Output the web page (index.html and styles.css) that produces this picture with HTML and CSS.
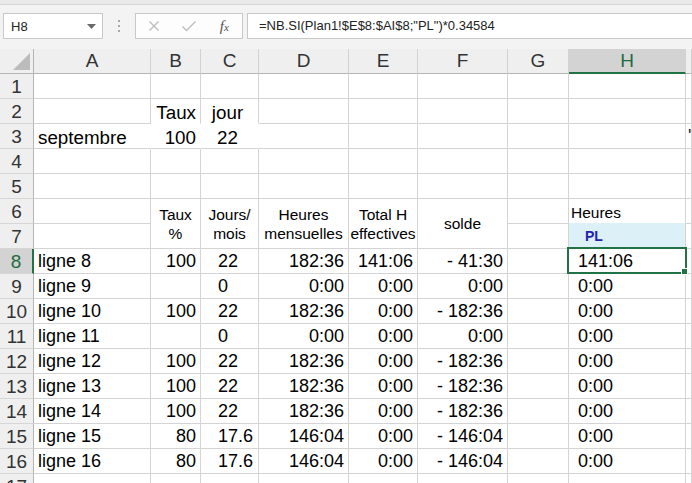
FILE: index.html
```html
<!DOCTYPE html>
<html>
<head>
<meta charset="utf-8">
<link rel="stylesheet" href="styles.css">
</head>
<body>
<div class="app">
  <div class="ribbon"></div>
  <div class="fbar">
    <div class="namebox">H8
      <svg class="dd" width="9" height="5" viewBox="0 0 9 5"><path d="M0 0H9L4.5 5Z" fill="#6a6a6a"/></svg>
    </div>
    <div class="dots"><i></i><i></i><i></i></div>
    <div class="fbtns">
      <div class="btn"><svg width="12" height="12" viewBox="0 0 12 12"><path d="M1.5 1.5L10.5 10.5M10.5 1.5L1.5 10.5" stroke="#bdbdbd" stroke-width="1.4" fill="none"/></svg></div>
      <div class="btn"><svg width="16" height="12" viewBox="0 0 16 12"><path d="M1.5 6.5L5.5 10.5L14.5 1.5" stroke="#bdbdbd" stroke-width="1.4" fill="none"/></svg></div>
      <div class="btn"><span class="fx">f<span>x</span></span></div>
    </div>
    <div class="finput">=NB.SI(Plan1!$E$8:$AI$8;"PL")*0.34584</div>
  </div>
  <div class="sheet">
    <!-- header -->
    <div class="ch corner"><svg width="17" height="17" viewBox="0 0 17 17"><path d="M17 0V17H0Z" fill="#bcbcbc"/></svg></div>
    <div class="ch">A</div><div class="ch">B</div><div class="ch">C</div><div class="ch">D</div><div class="ch">E</div><div class="ch">F</div><div class="ch">G</div><div class="ch sel">H</div><div class="ch"></div>
    <!-- 1 -->
    <div class="rh">1</div><div class="c"></div><div class="c"></div><div class="c"></div><div class="c"></div><div class="c"></div><div class="c"></div><div class="c"></div><div class="c"></div><div class="c"></div>
    <!-- 2 -->
    <div class="rh">2</div><div class="c"></div><div class="c big r nb">Taux</div><div class="c big ctr nb">jour</div><div class="c"></div><div class="c"></div><div class="c"></div><div class="c"></div><div class="c"></div><div class="c"></div>
    <!-- 3 -->
    <div class="rh">3</div><div class="c big l nr">septembre</div><div class="c big r nr">100</div><div class="c big ctr nr">22</div><div class="c"></div><div class="c"></div><div class="c"></div><div class="c"></div><div class="c"></div><div class="c clip">'</div>
    <!-- 4 -->
    <div class="rh">4</div><div class="c"></div><div class="c"></div><div class="c"></div><div class="c"></div><div class="c"></div><div class="c"></div><div class="c"></div><div class="c"></div><div class="c"></div>
    <!-- 5 -->
    <div class="rh">5</div><div class="c"></div><div class="c"></div><div class="c"></div><div class="c"></div><div class="c"></div><div class="c"></div><div class="c"></div><div class="c"></div><div class="c"></div>
    <!-- 6 -->
    <div class="rh">6</div><div class="c"></div>
    <div class="c hd span"><span>Taux</span><span>%</span></div>
    <div class="c hd span"><span>Jours/</span><span>mois</span></div>
    <div class="c hd span"><span>Heures</span><span>mensuelles</span></div>
    <div class="c hd span"><span>Total H</span><span>effectives</span></div>
    <div class="c hd span"><span>solde</span></div>
    <div class="c"></div><div class="c hh">Heures</div><div class="c"></div>
    <!-- 7 -->
    <div class="rh">7</div><div class="c"></div><div class="c"></div><div class="c pl">PL</div><div class="c"></div>
    <!-- 8 -->
    <div class="rh rsel">8</div><div class="c l">ligne 8</div><div class="c r">100</div><div class="c cc">22</div><div class="c r">182:36</div><div class="c r">141:06</div><div class="c r">- 41:30</div><div class="c"></div><div class="c h active">141:06<div class="selbox"></div></div><div class="c"></div>
    <!-- 9 -->
    <div class="rh">9</div><div class="c l">ligne 9</div><div class="c r"></div><div class="c cc">0</div><div class="c r">0:00</div><div class="c r">0:00</div><div class="c r">0:00</div><div class="c"></div><div class="c h">0:00</div><div class="c"></div>
    <!-- 10 -->
    <div class="rh">10</div><div class="c l">ligne 10</div><div class="c r">100</div><div class="c cc">22</div><div class="c r">182:36</div><div class="c r">0:00</div><div class="c r">- 182:36</div><div class="c"></div><div class="c h">0:00</div><div class="c"></div>
    <!-- 11 -->
    <div class="rh">11</div><div class="c l">ligne 11</div><div class="c r"></div><div class="c cc">0</div><div class="c r">0:00</div><div class="c r">0:00</div><div class="c r">0:00</div><div class="c"></div><div class="c h">0:00</div><div class="c"></div>
    <!-- 12 -->
    <div class="rh">12</div><div class="c l">ligne 12</div><div class="c r">100</div><div class="c cc">22</div><div class="c r">182:36</div><div class="c r">0:00</div><div class="c r">- 182:36</div><div class="c"></div><div class="c h">0:00</div><div class="c"></div>
    <!-- 13 -->
    <div class="rh">13</div><div class="c l">ligne 13</div><div class="c r">100</div><div class="c cc">22</div><div class="c r">182:36</div><div class="c r">0:00</div><div class="c r">- 182:36</div><div class="c"></div><div class="c h">0:00</div><div class="c"></div>
    <!-- 14 -->
    <div class="rh">14</div><div class="c l">ligne 14</div><div class="c r">100</div><div class="c cc">22</div><div class="c r">182:36</div><div class="c r">0:00</div><div class="c r">- 182:36</div><div class="c"></div><div class="c h">0:00</div><div class="c"></div>
    <!-- 15 -->
    <div class="rh">15</div><div class="c l">ligne 15</div><div class="c r">80</div><div class="c cc">17.6</div><div class="c r">146:04</div><div class="c r">0:00</div><div class="c r">- 146:04</div><div class="c"></div><div class="c h">0:00</div><div class="c"></div>
    <!-- 16 -->
    <div class="rh">16</div><div class="c l">ligne 16</div><div class="c r">80</div><div class="c cc">17.6</div><div class="c r">146:04</div><div class="c r">0:00</div><div class="c r">- 146:04</div><div class="c"></div><div class="c h">0:00</div><div class="c"></div>
    <!-- 17 -->
    <div class="rh">17</div><div class="c"></div><div class="c"></div><div class="c"></div><div class="c"></div><div class="c"></div><div class="c"></div><div class="c"></div><div class="c"></div><div class="c"></div>
  </div>
</div>
</body>
</html>
```
FILE: styles.css
```css
html, body {
  margin: 0;
  padding: 0;
  background: #ffffff;
}
body {
  font-family: "Liberation Sans", Arial, sans-serif;
  width: 692px;
  height: 483px;
  overflow: hidden;
}
.app {
  width: 692px;
  height: 483px;
  overflow: hidden;
}
.ribbon {
  height: 4px;
  background: #e9e9e9;
  border-bottom: 1px solid #d6d6d6;
}
.fbar {
  height: 44px;
  box-sizing: border-box;
  padding-top: 8px;
  background: #f3f3f3;
  display: flex;
  align-items: flex-start;
}
.namebox {
  margin-left: 3px;
  width: 100px;
  height: 26px;
  box-sizing: border-box;
  background: #ffffff;
  border: 1px solid #c8c8c8;
  display: flex;
  align-items: center;
  justify-content: space-between;
  padding: 0 6px 0 7px;
  font-size: 13px;
  color: #222;
}
.dots {
  width: 32px;
  height: 26px;
  display: flex;
  flex-direction: column;
  align-items: center;
  justify-content: center;
  gap: 3px;
}
.dots i {
  display: block;
  width: 2px;
  height: 2px;
  background: #a8a8a8;
}
.fbtns {
  width: 108px;
  height: 26px;
  box-sizing: border-box;
  border: 1px solid #c8c8c8;
  background: #fdfdfd;
  display: flex;
  align-items: center;
}
.btn {
  flex: 1;
  display: flex;
  align-items: center;
  justify-content: center;
}
.fx {
  font-family: "Liberation Serif", "DejaVu Serif", serif;
  font-style: italic;
  font-size: 15px;
  color: #505050;
  line-height: 1;
}
.fx span {
  font-size: 11px;
}
.finput {
  margin-left: 4px;
  flex: 1;
  height: 26px;
  box-sizing: border-box;
  border: 1px solid #c8c8c8;
  border-right: none;
  background: #ffffff;
  padding-left: 11px;
  font-size: 13px;
  line-height: 24px;
  color: #222;
  white-space: nowrap;
  overflow: hidden;
}
.sheet {
  display: grid;
  grid-template-columns: 34px 117px 50px 58px 90px 69px 90px 61px 117px 6px;
  grid-template-rows: 25px;
  grid-auto-rows: 25px;
}
.ch {
  box-sizing: border-box;
  background: #efefef;
  border-right: 1px solid #d2d2d2;
  border-bottom: 1px solid #b5b5b5;
  text-align: center;
  font-size: 19px;
  line-height: 24px;
  color: #333;
}
.ch.corner {
  display: flex;
  align-items: flex-end;
  justify-content: flex-end;
  padding: 0 3px 3px 0;
  border-right: 1px solid #b5b5b5;
}
.ch.corner svg {
  display: block;
}
.ch.sel {
  background: #d3d3d3;
  color: #1f6b40;
  border-bottom: 2px solid #217346;
}
.rh {
  box-sizing: border-box;
  background: #efefef;
  border-right: 1px solid #b5b5b5;
  border-bottom: 1px solid #d6d6d6;
  text-align: center;
  font-size: 19px;
  line-height: 23px;
  padding-top: 1px;
  color: #333;
}
.rh.rsel {
  background: #d3d3d3;
  color: #1f6b40;
  border-right: 2px solid #217346;
}
.c {
  box-sizing: border-box;
  background: #ffffff;
  border-right: 1px solid #d4d4d4;
  border-bottom: 1px solid #d4d4d4;
  font-size: 18px;
  line-height: 24px;
  color: #000;
  white-space: nowrap;
}
.clip {
  overflow: hidden;
  padding-left: 2px;
  color: #222;
}
.r { text-align: right; padding-right: 4px; }
.l { padding-left: 4px; }
.ctr { text-align: center; padding-right: 4px; }
.cc { padding-left: 17px; }
.h { padding-left: 9px; }
.big {
  font-size: 18.8px;
  padding-top: 1.5px;
}
.nb { border-bottom-color: #ffffff; }
.nr { border-right-color: #ffffff; }
.span {
  grid-row: span 2;
}
.hd {
  font-size: 15.5px;
  line-height: 19.5px;
  display: flex;
  flex-direction: column;
  align-items: center;
  justify-content: center;
  padding-top: 1px;
}
.hh {
  font-size: 15.5px;
  line-height: 21px;
  padding-top: 3px;
  padding-left: 2px;
  border-bottom-color: #dcf0f7;
}
.pl {
  background: #dcf0f7;
  color: #2222b0;
  font-weight: bold;
  font-size: 14px;
  line-height: 24px;
  padding-left: 16px;
}
.active {
  position: relative;
}
.selbox {
  position: absolute;
  left: -2px;
  top: -2px;
  width: 120px;
  height: 27px;
  box-sizing: border-box;
  border: 2px solid #217346;
}
.selbox::after {
  content: "";
  position: absolute;
  right: -3px;
  bottom: -3px;
  width: 5px;
  height: 5px;
  background: #217346;
  border: 1px solid #ffffff;
}
```
